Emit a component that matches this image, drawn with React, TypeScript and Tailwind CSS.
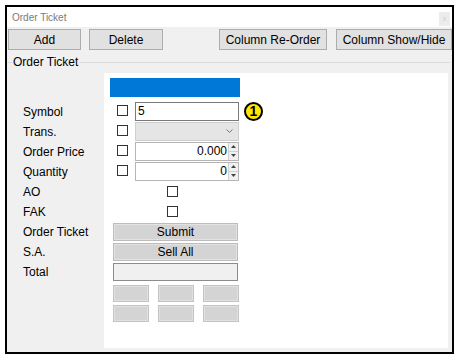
const labels = ['Symbol', 'Trans.', 'Order Price', 'Quantity', 'AO', 'FAK', 'Order Ticket', 'S.A.', 'Total'];

function Check({ className = '' }: { className?: string }) {
  return <div className={`h-[11px] w-[11px] shrink-0 border border-[#333] bg-white ${className}`}></div>;
}

function Spinner() {
  return (
    <div className="flex h-full w-[10px] flex-col border-l border-[#d0d0d0] bg-[#f0f0f0]">
      <div className="flex flex-1 items-center justify-center border-b border-[#d0d0d0]">
        <svg width="5" height="3" viewBox="0 0 5 3"><path d="M0 3 L2.5 0 L5 3 Z" fill="#444" /></svg>
      </div>
      <div className="flex flex-1 items-center justify-center">
        <svg width="5" height="3" viewBox="0 0 5 3"><path d="M0 0 L2.5 3 L5 0 Z" fill="#444" /></svg>
      </div>
    </div>
  );
}

function ToolButton({ label, className }: { label: string; className: string }) {
  return (
    <button className={`h-[21px] border border-[#adadad] bg-[#e1e1e1] text-[12px] text-black ${className}`}>
      {label}
    </button>
  );
}

export default function App() {
  return (
    <div className="h-[360px] w-[460px] bg-white pl-[5px] pt-[5px]" style={{ fontFamily: '"Liberation Sans", Arial, sans-serif' }}>
      <div className="flex h-[349px] w-[449px] flex-col border-2 border-black bg-[#f0f0f0]">
        {/* title bar */}
        <div className="flex h-[20px] items-center justify-between bg-white pl-[5px] pr-[2px]">
          <span className="text-[10px] text-[#7a7a7a]">Order Ticket</span>
          <div className="mt-[4px] flex h-[14px] w-[11px] items-center justify-center bg-[#ececec] text-[7px] text-[#ccc]">x</div>
        </div>

        {/* toolbar */}
        <div className="flex pt-[2px]">
          <ToolButton label="Add" className="ml-px w-[73px]" />
          <ToolButton label="Delete" className="ml-[8px] w-[74px]" />
          <ToolButton label="Column Re-Order" className="ml-[56px] w-[108px]" />
          <ToolButton label="Column Show/Hide" className="ml-[9px] w-[116px]" />
        </div>

        {/* group header */}
        <div className="mt-[5px] flex h-[14px] items-center">
          <div className="h-px w-[5px] bg-[#dcdcdc]"></div>
          <span className="px-px text-[12px] text-black">Order Ticket</span>
          <div className="mr-[2px] h-px flex-1 bg-[#dcdcdc]"></div>
        </div>

        {/* body */}
        <div className="mt-[4px] flex flex-1">
          <div className="w-[97px] pt-[29px]">
            {labels.map((l) => (
              <div key={l} className="flex h-[20px] items-center pl-[16px] text-[12px] text-black">{l}</div>
            ))}
          </div>

          <div className="mb-[4px] w-[344px] bg-white pl-[6px] pt-[5px]">
            <div className="h-[19px] w-[130px] bg-[#0078d7]"></div>

            <div className="mt-[4px] text-[12px] text-black">
              {/* Symbol */}
              <div className="flex h-[20px] items-center">
                <Check className="ml-[7px] mt-[-2px]" />
                <div className="ml-[7px] flex h-[19px] w-[104px] shrink-0 items-center border border-[#7a7a7a] pl-[2px]">5</div>
                <div className="ml-[5px] flex h-[19px] w-[19px] shrink-0 items-center justify-center rounded-full border-2 border-black bg-[#ffe800] text-[14px] font-bold leading-none">1</div>
              </div>
              {/* Trans */}
              <div className="flex h-[20px] items-center">
                <Check className="ml-[7px] mt-[-2px]" />
                <div className="ml-[7px] flex h-[19px] w-[104px] items-center justify-end border border-[#cfcfcf] bg-[#e5e5e5] pr-[5px]">
                  <svg width="7" height="4" viewBox="0 0 7 4"><path d="M0.5 0.5 L3.5 3.5 L6.5 0.5" stroke="#777" fill="none" /></svg>
                </div>
              </div>
              {/* Order Price */}
              <div className="flex h-[20px] items-center">
                <Check className="ml-[7px] mt-[-2px]" />
                <div className="ml-[7px] flex h-[19px] w-[104px] items-center justify-end border border-[#b5b5b5]">
                  <span className="pr-px">0.000</span>
                  <Spinner />
                </div>
              </div>
              {/* Quantity */}
              <div className="flex h-[20px] items-center">
                <Check className="ml-[7px] mt-[-2px]" />
                <div className="ml-[7px] flex h-[19px] w-[104px] items-center justify-end border border-[#b5b5b5]">
                  <span className="pr-px">0</span>
                  <Spinner />
                </div>
              </div>
              {/* AO / FAK */}
              <div className="flex h-[20px] items-center">
                <Check className="ml-[57px]" />
              </div>
              <div className="flex h-[20px] items-center">
                <Check className="ml-[57px]" />
              </div>
              {/* Submit / Sell All */}
              <div className="flex h-[20px] items-end">
                <div className="ml-[3px] flex h-[18px] w-[125px] items-center justify-center border border-[#bcbcbc] bg-[#d4d4d4] shadow-[inset_0_0_0_1px_#e2e2e2]">Submit</div>
              </div>
              <div className="flex h-[20px] items-end">
                <div className="ml-[3px] flex h-[18px] w-[125px] items-center justify-center border border-[#bcbcbc] bg-[#d4d4d4] shadow-[inset_0_0_0_1px_#e2e2e2]">Sell All</div>
              </div>
              {/* Total */}
              <div className="flex h-[20px] items-end">
                <div className="ml-[3px] h-[18px] w-[125px] border border-[#8c8c8c] bg-[#f0f0f0]"></div>
              </div>

              <div className="ml-[3px] mt-[4px] grid w-[126px] grid-cols-3 gap-x-[9px] gap-y-[3px]">
                {[0, 1, 2, 3, 4, 5].map((i) => (
                  <div key={i} className="h-[17px] w-[36px] border border-[#c4c4c4] bg-[#d4d4d4] shadow-[inset_0_0_0_1px_#e0e0e0]"></div>
                ))}
              </div>
            </div>
          </div>
        </div>
      </div>
    </div>
  );
}
